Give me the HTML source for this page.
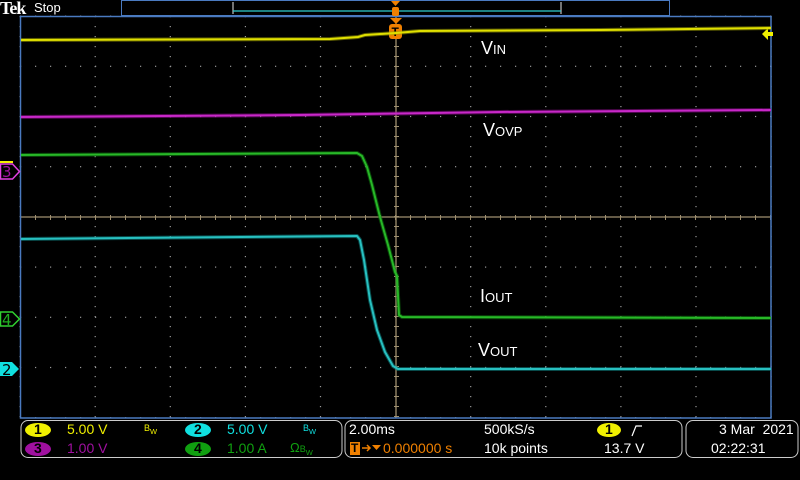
<!DOCTYPE html><html><head><style>
body{margin:0;background:#000;width:800px;height:480px;overflow:hidden;font-family:"Liberation Sans",sans-serif}
.t{position:absolute;white-space:nowrap}
</style></head><body>
<svg width="800" height="480" style="position:absolute;left:0;top:0">
<g id="g"></g>
<line x1="21" y1="217" x2="771" y2="217" stroke="#a09070" stroke-width="1.3"/>
<line x1="396" y1="17" x2="396" y2="418" stroke="#a09070" stroke-width="1.3"/>
<rect x="20.5" y="16.5" width="750.5" height="401.5" fill="none" stroke="#4a7ac0" stroke-width="1.5"/>
<rect x="121.5" y="0.5" width="548" height="15" fill="none" stroke="#4a7ac0"/>
<path d="M233 2V14M561 2V14" stroke="#999" stroke-width="1.5"/>
<line x1="233" y1="11" x2="561" y2="11" stroke="#30d0d0" stroke-width="1.2"/>
<rect x="392" y="7" width="7" height="9" rx="2" fill="#f08000"/>
<path d="M391 1h9l-4.5 5z" fill="#f08000"/>
<path d="M390 18h12l-6 6z" fill="#f08000"/>
<rect x="389" y="24" width="13" height="15" rx="3" fill="#f08000"/>
<text x="391.5" y="36" font-size="12" fill="#000" font-weight="bold" font-family="Liberation Sans">T</text>
<path d="M762 34l6-6v4h5v4h-5v4z" fill="#f0f000"/>
<g fill="none" stroke-width="4" stroke-linejoin="round" opacity="0.55">
<path d="M21 40L330 39L358 37L365 35L396 33L420 31L600 30L771 28" stroke="#a0a000"/>
<path d="M21 117L300 115L500 112L771 110" stroke="#901090"/>
<path d="M21 155L357 153L362 156L367 167L372 185L380 217L388 245L395 272L397 276L399 315L402 317L771 318" stroke="#108010"/>
<path d="M21 239L357 236L360 240L364 260L370 300L377 330L385 352L393 366L398 369L771 369" stroke="#108888"/>
</g>
<g fill="none" stroke-width="2" stroke-linejoin="round">
<path d="M21 40L330 39L358 37L365 35L396 33L420 31L600 30L771 28" stroke="#e0e000"/>
<path d="M21 117L300 115L500 112L771 110" stroke="#c828c8"/>
<path d="M21 155L357 153L362 156L367 167L372 185L380 217L388 245L395 272L397 276L399 315L402 317L771 318" stroke="#28b828"/>
<path d="M21 239L357 236L360 240L364 260L370 300L377 330L385 352L393 366L398 369L771 369" stroke="#28c0c0"/>
</g>
<path d="M0.5 164h12l7 7.5l-7 7.5h-12z" fill="#000" stroke="#e040e0" stroke-width="1.5"/>
<rect x="0" y="161" width="13" height="2" fill="#f0f000"/>
<text x="2" y="177" font-size="15" fill="#a010a0" font-family="DejaVu Sans">3</text>
<path d="M0.5 312h12l7 7l-7 7h-12z" fill="#000" stroke="#30d030" stroke-width="1.5"/>
<text x="2" y="325" font-size="15" fill="#20b020" font-family="DejaVu Sans">4</text>
<path d="M0 362h12l7 7l-7 7h-12z" fill="#10e0e0"/>
<text x="2" y="375" font-size="15" fill="#000" font-family="DejaVu Sans">2</text>
<rect x="21" y="420.5" width="321" height="37" rx="7" fill="none" stroke="#ccc"/>
<rect x="345" y="420.5" width="337" height="37" rx="7" fill="none" stroke="#ccc"/>
<rect x="686" y="420.5" width="112" height="37" rx="7" fill="none" stroke="#ccc"/>
<ellipse cx="38" cy="430" rx="13" ry="7" fill="#f0f000"/>
<ellipse cx="38" cy="449" rx="13" ry="7" fill="#a010a0"/>
<ellipse cx="198" cy="430" rx="13" ry="7" fill="#10e0e0"/>
<ellipse cx="198" cy="449" rx="13" ry="7" fill="#10a010"/>
<ellipse cx="609" cy="430" rx="12" ry="7" fill="#f0f000"/>
<rect x="350" y="442" width="10" height="13" fill="#f08000"/>
<path d="M362 448h8M367 445l3 3l-3 3" stroke="#f08000" fill="none" stroke-width="1.5"/>
<path d="M372 445h9l-4.5 5z" fill="#f08000"/>
<path d="M632 436l4-10h6" stroke="#fff" fill="none" stroke-width="1.2"/>
</svg>
<script>
var s='',g=document.getElementById('g');
for(var i=0;i<=10;i++){var x=20+i*75.1;for(var y=16;y<=418;y+=10)s+='<rect x="'+(x-0.5)+'" y="'+y+'" width="1.2" height="1.2" fill="#999"/>';}
for(var j=0;j<=8;j++){var y=16+j*50.2;for(var x=20;x<=771;x+=15)s+='<rect x="'+x+'" y="'+(y-0.5)+'" width="1.2" height="1.2" fill="#999"/>';}
for(var x=20;x<=771;x+=15){s+='<rect x="'+x+'" y="215" width="1" height="5" fill="#a09070"/>';}
for(var y=16;y<=418;y+=10){s+='<rect x="394" y="'+y+'" width="5" height="1" fill="#a09070"/>';}
g.innerHTML=s;
</script>
<div class="t" style="left:0;top:-2px;font:bold 18px 'Liberation Serif',serif;color:#fff;letter-spacing:-1px">Tek</div>
<div class="t" style="left:34px;top:0px;font-size:13px;color:#fff">Stop</div>
<div class="t" style="left:481px;top:38px;font-size:18px;color:#fff">V<span style="font-size:13px">IN</span></div>
<div class="t" style="left:483px;top:120px;font-size:18px;color:#fff">V<span style="font-size:13px">OVP</span></div>
<div class="t" style="left:480px;top:286px;font-size:18px;color:#fff">I<span style="font-size:13px">OUT</span></div>
<div class="t" style="left:478px;top:340px;font-size:18px;color:#fff">V<span style="font-size:13px">OUT</span></div>
<div class="t" style="left:34px;top:421px;font-size:14px;color:#000;font-weight:bold">1</div>
<div class="t" style="left:34px;top:440px;font-size:14px;color:#000;font-weight:bold">3</div>
<div class="t" style="left:194px;top:421px;font-size:14px;color:#000;font-weight:bold">2</div>
<div class="t" style="left:194px;top:440px;font-size:14px;color:#000;font-weight:bold">4</div>
<div class="t" style="left:67px;top:421px;font-size:14px;color:#f0f000">5.00 V</div>
<div class="t" style="left:67px;top:440px;font-size:14px;color:#a010a0">1.00 V</div>
<div class="t" style="left:144px;top:423px;font-size:9px;color:#f0f000">B<sub>W</sub></div>
<div class="t" style="left:227px;top:421px;font-size:14px;color:#10e0e0">5.00 V</div>
<div class="t" style="left:227px;top:440px;font-size:14px;color:#10a010">1.00 A</div>
<div class="t" style="left:303px;top:423px;font-size:9px;color:#10e0e0">B<sub>W</sub></div>
<div class="t" style="left:290px;top:440px;font-size:13px;color:#10a010">Ω<span style="font-size:9px">B<sub>W</sub></span></div>
<div class="t" style="left:349px;top:421px;font-size:14px;color:#fff">2.00ms</div>
<div class="t" style="left:351px;top:441px;font-size:12px;color:#000;font-weight:bold">T</div>
<div class="t" style="left:383px;top:440px;font-size:14px;color:#f08000">0.000000 s</div>
<div class="t" style="left:484px;top:421px;font-size:14px;color:#fff">500kS/s</div>
<div class="t" style="left:484px;top:440px;font-size:14px;color:#fff">10k points</div>
<div class="t" style="left:605px;top:421px;font-size:14px;color:#000;font-weight:bold">1</div>
<div class="t" style="left:604px;top:440px;font-size:14px;color:#fff">13.7 V</div>
<div class="t" style="left:719px;top:421px;font-size:14px;color:#fff">3 Mar &nbsp;2021</div>
<div class="t" style="left:711px;top:440px;font-size:14px;color:#fff">02:22:31</div>
</body></html>
